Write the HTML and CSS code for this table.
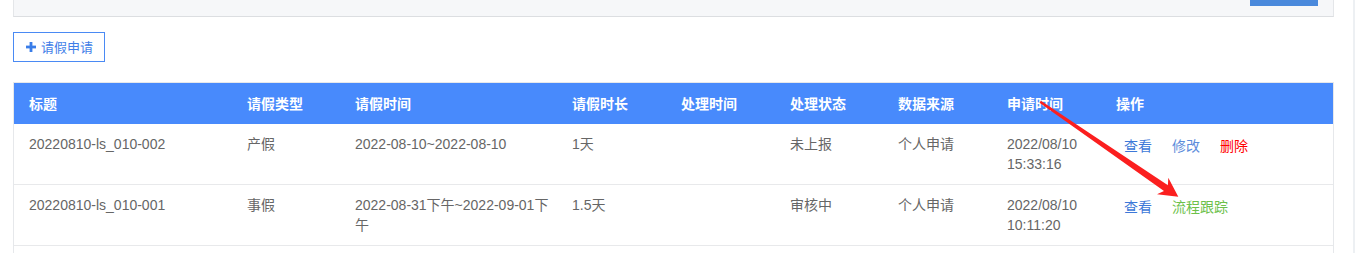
FILE: index.html
```html
<!DOCTYPE html>
<html lang="zh-CN">
<head>
<meta charset="utf-8">
<title>请假申请</title>
<link rel="stylesheet" href="styles.css">
</head>
<body>
<div class="page">
  <div class="search-panel">
    <div class="panel-actions"><span class="panel-btn"></span></div>
  </div>

  <div class="toolbar">
    <button class="btn-add" type="button">
      <svg class="plus" width="10" height="10" viewBox="0 0 10 10" aria-hidden="true">
        <rect x="3.6" y="0" width="2.8" height="10" fill="currentColor"/>
        <rect x="0" y="3.6" width="10" height="2.8" fill="currentColor"/>
      </svg>
      <span>请假申请</span>
    </button>
  </div>

  <div class="table-wrap">
    <table class="grid">
      <colgroup>
        <col class="c-title"><col class="c-type"><col class="c-range"><col class="c-len">
        <col class="c-proc"><col class="c-state"><col class="c-src"><col class="c-apply"><col class="c-ops">
      </colgroup>
      <thead>
        <tr>
          <th>标题</th><th>请假类型</th><th>请假时间</th><th>请假时长</th><th>处理时间</th>
          <th>处理状态</th><th>数据来源</th><th>申请时间</th><th>操作</th>
        </tr>
      </thead>
      <tbody>
        <tr>
          <td>20220810-ls_010-002</td>
          <td>产假</td>
          <td>2022-08-10~2022-08-10</td>
          <td>1天</td>
          <td></td>
          <td>未上报</td>
          <td>个人申请</td>
          <td>2022/08/10 15:33:16</td>
          <td><div class="ops"><a class="op op-view">查看</a><a class="op op-edit">修改</a><a class="op op-del">删除</a></div></td>
        </tr>
        <tr>
          <td>20220810-ls_010-001</td>
          <td>事假</td>
          <td>2022-08-31下午~2022-09-01下午</td>
          <td>1.5天</td>
          <td></td>
          <td>审核中</td>
          <td>个人申请</td>
          <td>2022/08/10 10:11:20</td>
          <td><div class="ops"><a class="op op-view">查看</a><a class="op op-flow">流程跟踪</a></div></td>
        </tr>
        <tr class="row-empty">
          <td></td><td></td><td></td><td></td><td></td><td></td><td></td><td></td><td></td>
        </tr>
      </tbody>
    </table>
  </div>
</div>

<svg class="annot" width="1355" height="253" viewBox="0 0 1355 253" aria-hidden="true">
  <polygon fill="#fb1f1f" points="1040.9,100.8 1167.9,185.3 1168.3,177.7 1178.3,196.7 1157.0,194.2 1164.0,191.1 1039.5,102.8"/>
</svg>
</body>
</html>
```

FILE: styles.css
```css
html, body {
  margin: 0;
  padding: 0;
  background: #ffffff;
}

body {
  width: 1353px;
  height: 253px;
  overflow: hidden;
  border-right: 2px solid #edf0f3;
  position: relative;
  font-family: "Liberation Sans", "Noto Sans CJK SC", sans-serif;
  font-size: 14px;
  color: #666666;
}

.page {
  padding: 0 19px 0 13px;
}

.search-panel {
  height: 16px;
  background: #f6f7f9;
  border-left: 1px solid #e4e6e9;
  border-right: 1px solid #e4e6e9;
  border-bottom: 1px solid #dcdee1;
  display: flex;
  justify-content: flex-end;
}

.panel-actions {
  padding-right: 15px;
}

.panel-btn {
  display: block;
  width: 68px;
  height: 6px;
  background: #4a89dc;
}

.toolbar {
  margin-top: 15px;
  margin-bottom: 20px;
  display: flex;
}

.btn-add {
  display: flex;
  align-items: center;
  gap: 5px;
  height: 30px;
  padding: 0 11px 0 12px;
  margin: 0;
  border: 1px solid #4a8af4;
  background: #ffffff;
  color: #3f7ee8;
  font-family: "Liberation Sans", "Noto Sans CJK SC", sans-serif;
  font-size: 13px;
  line-height: 1;
  cursor: pointer;
}

.btn-add .plus {
  display: block;
  color: #3a7de8;
}

.table-wrap {
  border: 1px solid #e6e8eb;
  border-bottom: none;
}

.grid {
  width: 100%;
  table-layout: fixed;
  border-collapse: collapse;
  border-spacing: 0;
}

.c-title { width: 218px; }
.c-type  { width: 108px; }
.c-range { width: 217px; }
.c-len   { width: 109px; }
.c-proc  { width: 109px; }
.c-state { width: 108px; }
.c-src   { width: 109px; }
.c-apply { width: 109px; }
.c-ops   { width: 232px; }

.grid th {
  height: 41px;
  padding: 0 0 0 15px;
  background: #488afc;
  color: #ffffff;
  font-weight: bold;
  font-size: 14px;
  text-align: left;
  vertical-align: middle;
  line-height: 20px;
}

.grid td {
  padding: 10px 0 10px 15px;
  line-height: 20px;
  vertical-align: top;
  text-align: left;
  border-bottom: 1px solid #e8e9eb;
  word-break: normal;
}

.grid .row-empty td {
  height: 7px;
  padding: 0;
  border-bottom: none;
}

.ops {
  display: flex;
  gap: 20px;
  padding-left: 8px;
  padding-top: 2px;
}

.op {
  cursor: pointer;
  text-decoration: none;
}

.op-view { color: #3d78d8; }
.op-edit { color: #5d8ddb; }
.op-del  { color: #ff0000; }
.op-flow { color: #6cc14b; }

.annot {
  position: absolute;
  left: 0;
  top: 0;
  pointer-events: none;
}
```
